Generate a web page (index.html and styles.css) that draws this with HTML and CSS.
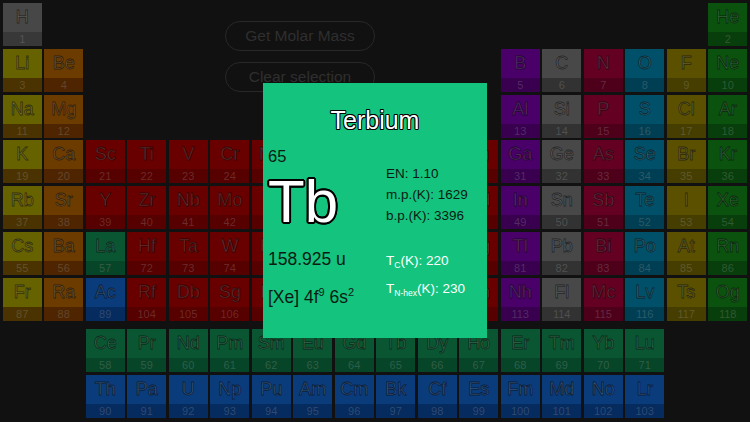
FILE: index.html
```html
<!DOCTYPE html>
<html lang="en">
<head>
<meta charset="utf-8">
<title>Periodic Table</title>
<link rel="stylesheet" href="styles.css">
</head>
<body>
<main class="table">
  <div class="tools">
    <button class="pill">Get Molar Mass</button>
    <button class="pill">Clear selection</button>
  </div>

  <div class="cell hyd"><span class="sym">H</span><span class="num">1</span></div>
  <div class="skip"></div>
  <div class="skip s5"></div>
  <div class="cell nob"><span class="sym">He</span><span class="num">2</span></div>

  <div class="cell alk"><span class="sym">Li</span><span class="num">3</span></div>
  <div class="cell ae"><span class="sym">Be</span><span class="num">4</span></div>
  <div class="cell post"><span class="sym">B</span><span class="num">5</span></div>
  <div class="cell met"><span class="sym">C</span><span class="num">6</span></div>
  <div class="cell non"><span class="sym">N</span><span class="num">7</span></div>
  <div class="cell chal"><span class="sym">O</span><span class="num">8</span></div>
  <div class="cell hal"><span class="sym">F</span><span class="num">9</span></div>
  <div class="cell nob"><span class="sym">Ne</span><span class="num">10</span></div>

  <div class="cell alk"><span class="sym">Na</span><span class="num">11</span></div>
  <div class="cell ae"><span class="sym">Mg</span><span class="num">12</span></div>
  <div class="skip s10"></div>
  <div class="cell post"><span class="sym">Al</span><span class="num">13</span></div>
  <div class="cell met"><span class="sym">Si</span><span class="num">14</span></div>
  <div class="cell non"><span class="sym">P</span><span class="num">15</span></div>
  <div class="cell chal"><span class="sym">S</span><span class="num">16</span></div>
  <div class="cell hal"><span class="sym">Cl</span><span class="num">17</span></div>
  <div class="cell nob"><span class="sym">Ar</span><span class="num">18</span></div>

  <div class="cell alk"><span class="sym">K</span><span class="num">19</span></div>
  <div class="cell ae"><span class="sym">Ca</span><span class="num">20</span></div>
  <div class="cell tm"><span class="sym">Sc</span><span class="num">21</span></div>
  <div class="cell tm"><span class="sym">Ti</span><span class="num">22</span></div>
  <div class="cell tm"><span class="sym">V</span><span class="num">23</span></div>
  <div class="cell tm"><span class="sym">Cr</span><span class="num">24</span></div>
  <div class="cell tm"><span class="sym">Mn</span><span class="num">25</span></div>
  <div class="cell tm"><span class="sym">Fe</span><span class="num">26</span></div>
  <div class="cell tm"><span class="sym">Co</span><span class="num">27</span></div>
  <div class="cell tm"><span class="sym">Ni</span><span class="num">28</span></div>
  <div class="cell tm"><span class="sym">Cu</span><span class="num">29</span></div>
  <div class="cell tm"><span class="sym">Zn</span><span class="num">30</span></div>
  <div class="cell post"><span class="sym">Ga</span><span class="num">31</span></div>
  <div class="cell met"><span class="sym">Ge</span><span class="num">32</span></div>
  <div class="cell non"><span class="sym">As</span><span class="num">33</span></div>
  <div class="cell chal"><span class="sym">Se</span><span class="num">34</span></div>
  <div class="cell hal"><span class="sym">Br</span><span class="num">35</span></div>
  <div class="cell nob"><span class="sym">Kr</span><span class="num">36</span></div>

  <div class="cell alk"><span class="sym">Rb</span><span class="num">37</span></div>
  <div class="cell ae"><span class="sym">Sr</span><span class="num">38</span></div>
  <div class="cell tm"><span class="sym">Y</span><span class="num">39</span></div>
  <div class="cell tm"><span class="sym">Zr</span><span class="num">40</span></div>
  <div class="cell tm"><span class="sym">Nb</span><span class="num">41</span></div>
  <div class="cell tm"><span class="sym">Mo</span><span class="num">42</span></div>
  <div class="cell tm"><span class="sym">Tc</span><span class="num">43</span></div>
  <div class="cell tm"><span class="sym">Ru</span><span class="num">44</span></div>
  <div class="cell tm"><span class="sym">Rh</span><span class="num">45</span></div>
  <div class="cell tm"><span class="sym">Pd</span><span class="num">46</span></div>
  <div class="cell tm"><span class="sym">Ag</span><span class="num">47</span></div>
  <div class="cell tm"><span class="sym">Cd</span><span class="num">48</span></div>
  <div class="cell post"><span class="sym">In</span><span class="num">49</span></div>
  <div class="cell met"><span class="sym">Sn</span><span class="num">50</span></div>
  <div class="cell non"><span class="sym">Sb</span><span class="num">51</span></div>
  <div class="cell chal"><span class="sym">Te</span><span class="num">52</span></div>
  <div class="cell hal"><span class="sym">I</span><span class="num">53</span></div>
  <div class="cell nob"><span class="sym">Xe</span><span class="num">54</span></div>

  <div class="cell alk"><span class="sym">Cs</span><span class="num">55</span></div>
  <div class="cell ae"><span class="sym">Ba</span><span class="num">56</span></div>
  <div class="cell lan"><span class="sym">La</span><span class="num">57</span></div>
  <div class="cell tm"><span class="sym">Hf</span><span class="num">72</span></div>
  <div class="cell tm"><span class="sym">Ta</span><span class="num">73</span></div>
  <div class="cell tm"><span class="sym">W</span><span class="num">74</span></div>
  <div class="cell tm"><span class="sym">Re</span><span class="num">75</span></div>
  <div class="cell tm"><span class="sym">Os</span><span class="num">76</span></div>
  <div class="cell tm"><span class="sym">Ir</span><span class="num">77</span></div>
  <div class="cell tm"><span class="sym">Pt</span><span class="num">78</span></div>
  <div class="cell tm"><span class="sym">Au</span><span class="num">79</span></div>
  <div class="cell tm"><span class="sym">Hg</span><span class="num">80</span></div>
  <div class="cell post"><span class="sym">Tl</span><span class="num">81</span></div>
  <div class="cell met"><span class="sym">Pb</span><span class="num">82</span></div>
  <div class="cell non"><span class="sym">Bi</span><span class="num">83</span></div>
  <div class="cell chal"><span class="sym">Po</span><span class="num">84</span></div>
  <div class="cell hal"><span class="sym">At</span><span class="num">85</span></div>
  <div class="cell nob"><span class="sym">Rn</span><span class="num">86</span></div>

  <div class="cell alk"><span class="sym">Fr</span><span class="num">87</span></div>
  <div class="cell ae"><span class="sym">Ra</span><span class="num">88</span></div>
  <div class="cell act"><span class="sym">Ac</span><span class="num">89</span></div>
  <div class="cell tm"><span class="sym">Rf</span><span class="num">104</span></div>
  <div class="cell tm"><span class="sym">Db</span><span class="num">105</span></div>
  <div class="cell tm"><span class="sym">Sg</span><span class="num">106</span></div>
  <div class="cell tm"><span class="sym">Bh</span><span class="num">107</span></div>
  <div class="cell tm"><span class="sym">Hs</span><span class="num">108</span></div>
  <div class="cell tm"><span class="sym">Mt</span><span class="num">109</span></div>
  <div class="cell tm"><span class="sym">Ds</span><span class="num">110</span></div>
  <div class="cell tm"><span class="sym">Rg</span><span class="num">111</span></div>
  <div class="cell tm"><span class="sym">Cn</span><span class="num">112</span></div>
  <div class="cell post"><span class="sym">Nh</span><span class="num">113</span></div>
  <div class="cell met"><span class="sym">Fl</span><span class="num">114</span></div>
  <div class="cell non"><span class="sym">Mc</span><span class="num">115</span></div>
  <div class="cell chal"><span class="sym">Lv</span><span class="num">116</span></div>
  <div class="cell hal"><span class="sym">Ts</span><span class="num">117</span></div>
  <div class="cell nob"><span class="sym">Og</span><span class="num">118</span></div>

  <div class="divider"></div>

  <div class="skip s2"></div>
  <div class="cell lan"><span class="sym">Ce</span><span class="num">58</span></div>
  <div class="cell lan"><span class="sym">Pr</span><span class="num">59</span></div>
  <div class="cell lan"><span class="sym">Nd</span><span class="num">60</span></div>
  <div class="cell lan"><span class="sym">Pm</span><span class="num">61</span></div>
  <div class="cell lan"><span class="sym">Sm</span><span class="num">62</span></div>
  <div class="cell lan"><span class="sym">Eu</span><span class="num">63</span></div>
  <div class="cell lan"><span class="sym">Gd</span><span class="num">64</span></div>
  <div class="cell lan"><span class="sym">Tb</span><span class="num">65</span></div>
  <div class="cell lan"><span class="sym">Dy</span><span class="num">66</span></div>
  <div class="cell lan"><span class="sym">Ho</span><span class="num">67</span></div>
  <div class="cell lan"><span class="sym">Er</span><span class="num">68</span></div>
  <div class="cell lan"><span class="sym">Tm</span><span class="num">69</span></div>
  <div class="cell lan"><span class="sym">Yb</span><span class="num">70</span></div>
  <div class="cell lan"><span class="sym">Lu</span><span class="num">71</span></div>
  <div class="skip s2"></div>

  <div class="skip s2"></div>
  <div class="cell act"><span class="sym">Th</span><span class="num">90</span></div>
  <div class="cell act"><span class="sym">Pa</span><span class="num">91</span></div>
  <div class="cell act"><span class="sym">U</span><span class="num">92</span></div>
  <div class="cell act"><span class="sym">Np</span><span class="num">93</span></div>
  <div class="cell act"><span class="sym">Pu</span><span class="num">94</span></div>
  <div class="cell act"><span class="sym">Am</span><span class="num">95</span></div>
  <div class="cell act"><span class="sym">Cm</span><span class="num">96</span></div>
  <div class="cell act"><span class="sym">Bk</span><span class="num">97</span></div>
  <div class="cell act"><span class="sym">Cf</span><span class="num">98</span></div>
  <div class="cell act"><span class="sym">Es</span><span class="num">99</span></div>
  <div class="cell act"><span class="sym">Fm</span><span class="num">100</span></div>
  <div class="cell act"><span class="sym">Md</span><span class="num">101</span></div>
  <div class="cell act"><span class="sym">No</span><span class="num">102</span></div>
  <div class="cell act"><span class="sym">Lr</span><span class="num">103</span></div>
</main>

<section class="popup">
  <h1 class="title">Terbium</h1>
  <div class="detail">
    <div class="left">
      <div class="anum">65</div>
      <div class="big">Tb</div>
      <div class="mass">158.925 u</div>
      <div class="config">[Xe] 4f<span class="sup">9</span> 6s<span class="sup">2</span></div>
    </div>
    <div class="right">
      <div class="prop">EN: 1.10</div>
      <div class="prop">m.p.(K): 1629</div>
      <div class="prop">b.p.(K): 3396</div>
      <div class="mag first">T<span class="sub">C</span>(K): 220</div>
      <div class="mag">T<span class="sub">N-hex</span>(K): 230</div>
    </div>
  </div>
</section>
</body>
</html>
```

FILE: styles.css
```css
html, body {
  margin: 0;
  height: 100%;
}

body {
  background: #111111;
  overflow: hidden;
  font-family: "Liberation Sans", Arial, sans-serif;
}

.table {
  display: grid;
  grid-template-columns: repeat(18, 39px);
  grid-template-rows: repeat(7, 43px) 2.6px repeat(2, 43px);
  column-gap: 2.5px;
  row-gap: 2.8px;
  padding: 3px 0 0 2.7px;
}

.tools {
  grid-column: 3 / 13;
  grid-row: 1 / 3;
  display: flex;
  flex-direction: column;
  gap: 11px;
  padding: 18px 0 0 139.3px;
}

.pill {
  width: 150px;
  height: 30px;
  border: 1px solid #282828;
  border-radius: 15px;
  background: transparent;
  color: #2f2f2f;
  font-family: "Liberation Sans", Arial, sans-serif;
  font-size: 15.5px;
  padding: 0;
}

.skip { grid-column: span 1; }
.skip.s2 { grid-column: span 2; }
.skip.s5 { grid-column: span 5; }
.skip.s10 { grid-column: span 10; }

.divider { grid-column: 1 / -1; }

.cell {
  display: flex;
  flex-direction: column;
  background: var(--top);
}

.sym {
  height: 29px;
  display: flex;
  align-items: center;
  justify-content: center;
  font-size: 18px;
  color: rgba(150, 150, 150, 0.3);
  -webkit-text-stroke: 0.8px rgba(0, 0, 0, 0.55);
}

.num {
  height: 14px;
  display: flex;
  align-items: center;
  justify-content: center;
  background: var(--bot);
  font-size: 11px;
  color: rgba(170, 170, 170, 0.26);
}

.hyd  { --top: #474747; --bot: #383838; }
.alk  { --top: #676200; --bot: #4a3300; }
.ae   { --top: #6c3b00; --bot: #4e2500; }
.tm   { --top: #680000; --bot: #560000; }
.lan  { --top: #0a5632; --bot: #074528; }
.act  { --top: #0a3b7a; --bot: #062b5e; }
.post { --top: #490068; --bot: #38004f; }
.met  { --top: #484848; --bot: #323232; }
.non  { --top: #640022; --bot: #4e001a; }
.chal { --top: #00506a; --bot: #003f53; }
.hal  { --top: #5a5000; --bot: #463e00; }
.nob  { --top: #0a520e; --bot: #083e0b; }

.popup {
  position: absolute;
  left: 263px;
  top: 83px;
  width: 224px;
  height: 255px;
  box-sizing: border-box;
  padding: 22px 0 0 5px;
  background: #14c47e;
  color: #0b1a12;
}

.title {
  margin: 0 0 0 -5px;
  height: 30px;
  line-height: 30px;
  text-align: center;
  font-size: 25px;
  font-weight: normal;
  color: #ffffff;
  text-shadow:
    1px 0 0 #000, -1px 0 0 #000, 0 1px 0 #000, 0 -1px 0 #000,
    0.7px 0.7px 0 #000, -0.7px 0.7px 0 #000, 0.7px -0.7px 0 #000, -0.7px -0.7px 0 #000;
}

.detail {
  display: grid;
  grid-template-columns: 118px 1fr;
}

.anum {
  margin-top: 11px;
  font-size: 16.5px;
  line-height: 20px;
}

.big {
  margin-top: 6px;
  font-size: 60px;
  line-height: 60px;
  color: #ffffff;
  text-shadow:
    2px 0 0 #000, -2px 0 0 #000, 0 2px 0 #000, 0 -2px 0 #000,
    1.4px 1.4px 0 #000, -1.4px 1.4px 0 #000, 1.4px -1.4px 0 #000, -1.4px -1.4px 0 #000,
    1.8px 0.8px 0 #000, -1.8px 0.8px 0 #000, 1.8px -0.8px 0 #000, -1.8px -0.8px 0 #000,
    0.8px 1.8px 0 #000, -0.8px 1.8px 0 #000, 0.8px -1.8px 0 #000, -0.8px -1.8px 0 #000;
}

.mass {
  margin-top: 16px;
  font-size: 17.5px;
  line-height: 22px;
}

.config {
  margin-top: 11px;
  font-size: 17.5px;
  line-height: 22px;
}

.sup {
  font-size: 11px;
  vertical-align: 7px;
}

.right {
  padding-top: 27.5px;
}

.prop {
  font-size: 13.5px;
  line-height: 21px;
}

.mag {
  font-size: 13.5px;
  line-height: 23px;
  color: #ffffff;
}

.mag.first {
  margin-top: 23px;
}

.sub {
  font-size: 8.5px;
  vertical-align: -3px;
}
```
